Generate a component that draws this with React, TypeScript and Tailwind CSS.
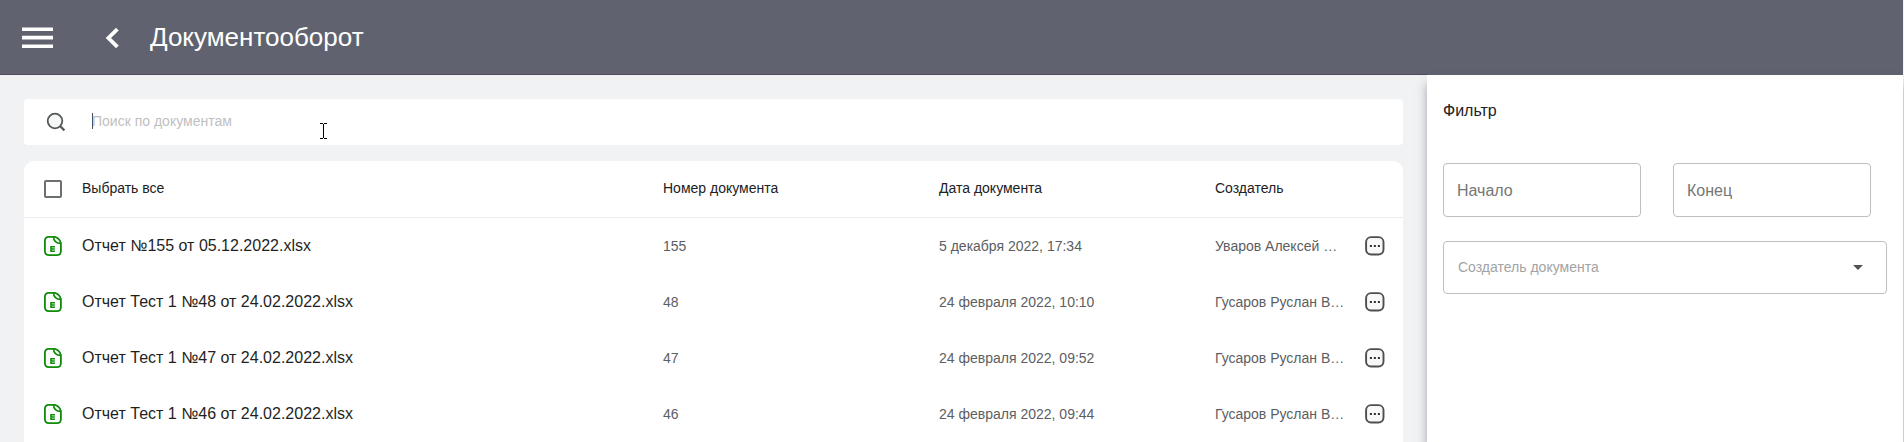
const documents = [
  { name: "Отчет №155 от 05.12.2022.xlsx", number: "155", date: "5 декабря 2022, 17:34", author: "Уваров Алексей …" },
  { name: "Отчет Тест 1 №48 от 24.02.2022.xlsx", number: "48", date: "24 февраля 2022, 10:10", author: "Гусаров Руслан В…" },
  { name: "Отчет Тест 1 №47 от 24.02.2022.xlsx", number: "47", date: "24 февраля 2022, 09:52", author: "Гусаров Руслан В…" },
  { name: "Отчет Тест 1 №46 от 24.02.2022.xlsx", number: "46", date: "24 февраля 2022, 09:44", author: "Гусаров Руслан В…" },
];

function SheetIcon() {
  return (
    <svg width="18" height="20" viewBox="0 0 18 20" fill="none" stroke="#0c8c0a" strokeWidth="1.8">
      <path d="M10.8 .9H5Q.9 .9 .9 5V15Q.9 19.1 5 19.1H13Q16.9 19.1 16.9 15V7.2Q15.6 2.2 10.8 .9Z" strokeLinejoin="round" />
      <path d="M9.6 1.2Q9.6 7 16.8 7.4" strokeWidth="1.6" />
      <path d="M11 10.7H7V15.2H11M7 12.95H10.8" strokeWidth="1.5" />
    </svg>
  );
}

function MoreIcon() {
  return (
    <svg width="20" height="20" viewBox="0 0 20 20">
      <rect x="1.1" y="1.1" width="17.4" height="17.4" rx="5" fill="#f7f8f7" stroke="#4c4e52" strokeWidth="1.9" />
      <path d="M4.9 9h2v2h-2zM8.9 9h2v2h-2zM12.9 9h2v2h-2z" fill="#2f3134" />
    </svg>
  );
}

function Field({ label }: { label: string }) {
  return (
    <div className="flex h-[54px] w-[198px] items-center rounded border border-[#bfbfbf] pt-0.5 pl-[13px] text-base text-[#747775]">
      {label}
    </div>
  );
}

const columns = "grid grid-cols-[58px_581px_276px_276px_150px_1fr] items-center";

export default function App() {
  return (
    <div className="relative flex h-[442px] w-full flex-col overflow-hidden bg-[#f1f2f4] pr-px font-['Liberation_Sans',Arial,sans-serif]">
      <header className="flex h-[75px] shrink-0 items-center bg-[#60636f]">
        <svg className="ml-[22px]" width="31" height="22" viewBox="0 0 31 22" fill="#fff">
          <path d="M0 .5h31v3.6H0zM0 8.8h31v3.6H0zM0 17.4h31v3.6H0z" />
        </svg>
        <svg className="ml-[52px]" width="15" height="22" viewBox="0 0 15 22" fill="none" stroke="#fff" strokeWidth="3.8">
          <path d="M12.4 2.2 3.4 11 12.4 19.8" />
        </svg>
        <h1 className="ml-[30px] pb-0.5 text-[26px] leading-[30px] text-white">Документооборот</h1>
      </header>

      <div className="flex min-h-0 grow">
        <main className="-mt-px flex w-[1427px] shrink-0 flex-col border-t border-[#4c4d62] px-6 pt-6">
          <div className="flex h-[46px] shrink-0 items-center rounded bg-white">
            <svg className="ml-[22px]" width="20" height="20" viewBox="0 0 20 20" fill="none" stroke="#55575a" strokeWidth="1.8">
              <circle cx="9" cy="9" r="7.3" fill="#f6f8f6" />
              <path d="M14 14 18.4 18.4" strokeWidth="2.2" />
            </svg>
            <span className="mb-0.5 ml-[26px] h-4 w-px bg-[#454b4b]" />
            <span className="-ml-px pb-0.5 text-sm text-[#bfbfbf]">Поиск по документам</span>
          </div>

          <section className="mt-4 grow rounded-t-[10px] bg-white text-sm text-[#212124]">
            <div className={`${columns} h-[57px] border-b border-[#ececee]`}>
              <span className="ml-5 size-[18px] rounded-xs border-2 border-[#6b706e]" />
              <span className="pb-0.5">Выбрать все</span>
              <span className="pb-0.5">Номер документа</span>
              <span className="pb-0.5">Дата документа</span>
              <span className="pb-0.5">Создатель</span>
            </div>
            {documents.map((doc) => (
              <div key={doc.number} className={`${columns} h-14 text-[#5c5e61]`}>
                <span className="pl-5">
                  <SheetIcon />
                </span>
                <span className="text-base text-[#1f1f22]">{doc.name}</span>
                <span>{doc.number}</span>
                <span>{doc.date}</span>
                <span>{doc.author}</span>
                <MoreIcon />
              </div>
            ))}
          </section>
        </main>

        <aside className="grow bg-white pt-6 pl-4 shadow-[0_8px_10px_-1px_rgba(50,55,65,0.5)]">
          <h2 className="text-base text-[#222224]">Фильтр</h2>
          <div className="mt-10 flex gap-8">
            <Field label="Начало" />
            <Field label="Конец" />
          </div>
          <div className="mt-6 flex h-[53px] w-[444px] items-center justify-between rounded border border-[#bfbfbf] pr-[23px] pl-3.5 text-sm text-[#a2a3a4]">
            <span className="pb-px">Создатель документа</span>
            <svg width="10" height="5" viewBox="0 0 10 5" fill="#505255">
              <path d="M0 0h10L5 5z" />
            </svg>
          </div>
        </aside>
      </div>

      <svg className="absolute top-[123px] left-80" width="7" height="16" viewBox="0 0 7 16" fill="none" stroke="#000">
        <path d="M0 .5h3M4 .5h3M3.5 1v14M0 15.5h3M4 15.5h3" shapeRendering="crispEdges" />
      </svg>
    </div>
  );
}
